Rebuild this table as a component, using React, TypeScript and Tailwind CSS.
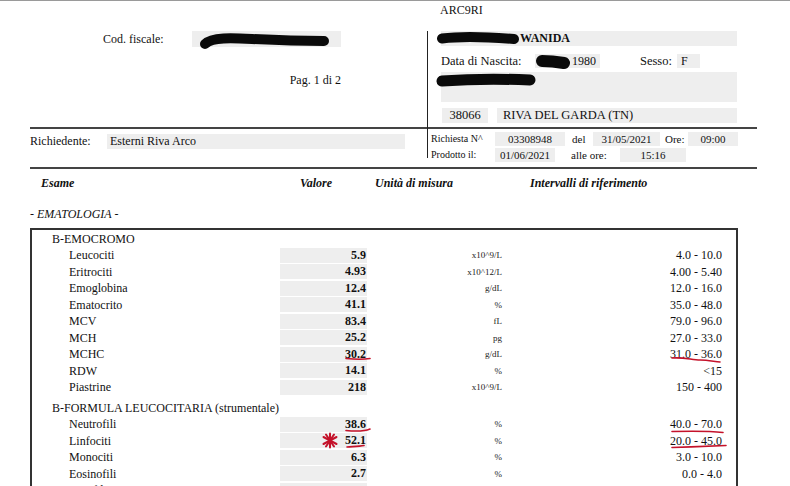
import React from "react";

type Row = { name: string; value: string; unit: string; lo: string; hi?: string };

const emocromo: Row[] = [
  { name: "Leucociti", value: "5.9", unit: "x10^9/L", lo: "4.0", hi: "10.0" },
  { name: "Eritrociti", value: "4.93", unit: "x10^12/L", lo: "4.00", hi: "5.40" },
  { name: "Emoglobina", value: "12.4", unit: "g/dL", lo: "12.0", hi: "16.0" },
  { name: "Ematocrito", value: "41.1", unit: "%", lo: "35.0", hi: "48.0" },
  { name: "MCV", value: "83.4", unit: "fL", lo: "79.0", hi: "96.0" },
  { name: "MCH", value: "25.2", unit: "pg", lo: "27.0", hi: "33.0" },
  { name: "MCHC", value: "30.2", unit: "g/dL", lo: "31.0", hi: "36.0" },
  { name: "RDW", value: "14.1", unit: "%", lo: "<15" },
  { name: "Piastrine", value: "218", unit: "x10^9/L", lo: "150", hi: "400" },
];

const formula: Row[] = [
  { name: "Neutrofili", value: "38.6", unit: "%", lo: "40.0", hi: "70.0" },
  { name: "Linfociti", value: "52.1", unit: "%", lo: "20.0", hi: "45.0" },
  { name: "Monociti", value: "6.3", unit: "%", lo: "3.0", hi: "10.0" },
  { name: "Eosinofili", value: "2.7", unit: "%", lo: "0.0", hi: "4.0" },
  { name: "Basofili", value: "0.3", unit: "%", lo: "0.0", hi: "2.0" },
];

function DataRow({ r }: { r: Row }) {
  return (
    <div className="flex h-[16.5px] items-center">
      <div className="w-[248px] pl-[37px] leading-[16px]">{r.name}</div>
      <div className="flex h-[15px] w-[87px] items-center justify-end bg-[#eeeeee] pr-[1px] font-bold leading-[15px]">
        {r.value}
      </div>
      <div className="w-[135px] text-right text-[9px] leading-[16px] text-[#222]">{r.unit}</div>
      <div className="w-[220px] text-right leading-[16px]">
        {r.hi ? `${r.lo} - ${r.hi}` : r.lo}
      </div>
    </div>
  );
}

export default function App() {
  const gray = "bg-[#eeeeee]";
  return (
    <div
      className="relative h-[486px] w-[790px] overflow-hidden border-t border-[#9a9a9a] bg-white text-[12px] text-[#111]"
      style={{ fontFamily: '"Liberation Serif", "Times New Roman", serif' }}
    >
      {/* Header block */}
      <div className="flex h-[126px]">
        <div className="w-[427px]">
          <div className="mt-[30px] flex h-[16px] items-center">
            <div className="w-[192px] pl-[103px] leading-[16px]">Cod. fiscale:</div>
            <div className={`h-[16px] w-[149px] ${gray}`} />
          </div>
          <div className="mt-[25px] w-[341px] text-right leading-[16px]">Pag. 1 di 2</div>
        </div>
        <div className="flex-1">
          <div className="h-[14px] pl-[13px] pt-[1px] leading-[16px]">ARC9RI</div>
          <div className="h-[112px] border-l border-[#222] pl-[13px]">
            <div className={`mt-[16px] flex h-[15px] w-[296px] items-center ${gray}`}>
              <span className="ml-[79px] font-bold leading-[15px]">WANIDA</span>
            </div>
            <div className="mt-[8px] flex h-[14px] items-center leading-[14px]">
              <div className="w-[94px] text-[12.5px]">Data di Nascita:</div>
              <div className={`flex h-[14px] w-[65px] items-center justify-end pr-[4px] ${gray}`}>1980</div>
              <div className="ml-[40px] w-[37px] text-[12.5px]">Sesso:</div>
              <div className={`h-[14px] w-[23px] pl-[4px] ${gray}`}>F</div>
            </div>
            <div className={`mt-[4px] h-[30px] w-[296px] ${gray}`} />
            <div className="mt-[6px] flex h-[15px] items-center leading-[15px] text-[12.5px]">
              <div className={`ml-[1px] h-[15px] w-[46px] text-center ${gray}`}>38066</div>
              <div className={`ml-[9px] h-[15px] w-[240px] pl-[6px] ${gray}`}>RIVA DEL GARDA (TN)</div>
            </div>
          </div>
        </div>
      </div>

      {/* Richiedente / Richiesta row */}
      <div className="ml-[30px] flex h-[42px] w-[727px] border-y-2 border-[#444]">
        <div className="w-[397px] pt-[5px]">
          <div className="flex h-[15px] items-center leading-[15px]">
            <div className="w-[77px]">Richiedente:</div>
            <div className={`h-[15px] w-[298px] pl-[3px] ${gray}`}>Esterni Riva Arco</div>
          </div>
        </div>
        <div className="h-[29px] border-l border-[#222] pl-[3px] text-[10px]">
          <div className="mt-[3px] flex h-[14px] items-center leading-[14px]">
            <div className="w-[64px]">Richiesta N^</div>
            <div className={`h-[14px] w-[70px] text-center text-[11px] ${gray}`}>03308948</div>
            <div className="ml-[7px] w-[21px] text-[11px]">del</div>
            <div className={`h-[14px] w-[67px] text-center text-[11px] ${gray}`}>31/05/2021</div>
            <div className="ml-[5px] w-[23px] text-[11px]">Ore:</div>
            <div className={`h-[14px] w-[50px] text-center text-[11px] ${gray}`}>09:00</div>
          </div>
          <div className="mt-[2px] flex h-[14px] items-center leading-[14px]">
            <div className="w-[64px]">Prodotto il:</div>
            <div className={`h-[14px] w-[60px] text-center text-[11px] ${gray}`}>01/06/2021</div>
            <div className="ml-[16px] w-[49px] text-[11px]">alle ore:</div>
            <div className={`h-[14px] w-[66px] text-center text-[11px] ${gray}`}>15:16</div>
          </div>
        </div>
      </div>

      {/* Column headers */}
      <div className="mt-[6px] flex font-bold italic leading-[16px]">
        <div className="w-[300px] pl-[41px]">Esame</div>
        <div className="w-[75px]">Valore</div>
        <div className="w-[155px]">Unità di misura</div>
        <div>Intervalli di riferimento</div>
      </div>

      <div className="ml-[30px] mt-[15px] italic leading-[16px]">- EMATOLOGIA -</div>

      {/* Results box */}
      <div className="ml-[30px] mt-[6px] w-[708px] border-x-2 border-t-2 border-[#333]">
        <div className="mt-[1px] h-[16px] pl-[20px] leading-[16px]">B-EMOCROMO</div>
        {emocromo.map((r) => (
          <DataRow key={r.name} r={r} />
        ))}
        <div className="mt-[4.5px] h-[16px] pl-[20px] leading-[16px]">B-FORMULA LEUCOCITARIA (strumentale)</div>
        {formula.map((r) => (
          <DataRow key={r.name} r={r} />
        ))}
      </div>

      {/* Redactions and pen annotations drawn over the page */}
      <svg
        className="pointer-events-none absolute left-0 top-0"
        width="790"
        height="486"
        viewBox="0 0 790 486"
      >
        <g fill="none" stroke="#0a0a0a" strokeLinecap="round" strokeLinejoin="round">
          <path d="M205 43 C212 36 232 37 252 38 S300 40 324 40" strokeWidth="10" />
          <path d="M442 37.5 C460 35 490 36 514 38" strokeWidth="10" />
          <path d="M542 60 C548 60 558 61 564 62" strokeWidth="12" />
          <path d="M442 80 C470 78 505 78 530 79" strokeWidth="11" />
        </g>
        <g fill="none" stroke="#c4122a" strokeLinecap="round">
          <path d="M346 357.5 C356 358.5 364 358.5 370 357.5" strokeWidth="1.6" />
          <path d="M672 357 C684 356 692 359 700 359 S714 360.5 720 361" strokeWidth="1.6" />
          <path d="M346 429.5 C356 430.5 364 430.5 370 428" strokeWidth="1.6" />
          <path d="M347 446 C353 445.5 359 445.5 364 444.5" strokeWidth="1.6" />
          <path d="M672 430.5 C690 430 710 430 723 431.5" strokeWidth="1.6" />
          <path d="M672 446.5 C690 446 712 445 726 444.5" strokeWidth="1.6" />
          <g strokeWidth="2" transform="translate(330 439.5)">
            <path d="M0 -7 L0 7" />
            <path d="M-6.5 -3.5 L6.5 3.5" />
            <path d="M-6.5 3.5 L6.5 -3.5" />
            <path d="M-4 -6 L4 6" />
            <path d="M-4 6 L4 -6" />
          </g>
        </g>
      </svg>
    </div>
  );
}
